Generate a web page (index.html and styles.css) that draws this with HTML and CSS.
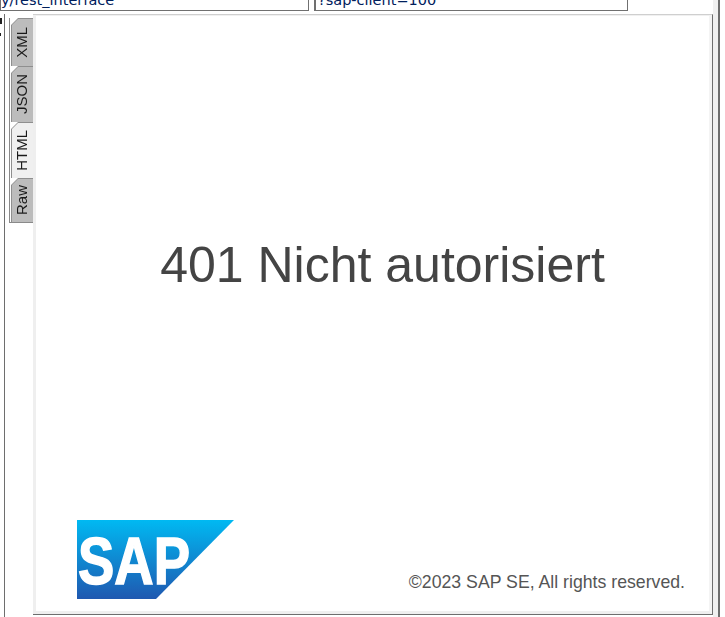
FILE: index.html
```html
<!DOCTYPE html>
<html lang="de">
<head>
<meta charset="utf-8">
<title>401 Nicht autorisiert</title>
<link rel="stylesheet" href="styles.css">
</head>
<body>
<div class="window">
  <div class="fields">
    <div class="field field-path"><span class="field-text">y/rest_interface</span></div>
    <div class="field field-query"><span class="field-text">?sap-client=100</span></div>
  </div>
  <div class="main">
    <div class="gutter"><span class="tick"></span><span class="tick tick-low"></span></div>
    <div class="tabs">
      <div class="tab tab-xml"><div class="tab-face"><span class="tab-label">XML</span></div></div>
      <div class="tab tab-json"><div class="tab-face"><span class="tab-label">JSON</span></div></div>
      <div class="tab tab-html tab-active"><div class="tab-face"><span class="tab-label">HTML</span></div></div>
      <div class="tab tab-raw"><div class="tab-face"><span class="tab-label">Raw</span></div></div>
    </div>
    <div class="panel">
      <div class="content">
        <h1 class="message">401 Nicht autorisiert</h1>
        <div class="footer">
          <svg class="logo" width="158" height="80" viewBox="0 0 158 80" role="img" aria-label="SAP">
            <defs>
              <linearGradient id="sapFill" x1="0" y1="0" x2="0" y2="1">
                <stop offset="0" stop-color="#00b9f2"/>
                <stop offset="1" stop-color="#1f58b0"/>
              </linearGradient>
            </defs>
            <polygon points="0,0 157,0 79,79 0,79" fill="url(#sapFill)"/>
            <text x="1" y="64" class="logo-text" textLength="112" lengthAdjust="spacingAndGlyphs">SAP</text>
          </svg>
          <p class="copyright">©2023 SAP SE, All rights reserved.</p>
        </div>
      </div>
    </div>
    <div class="strip"></div>
  </div>
</div>
</body>
</html>
```

FILE: styles.css
```css
* { box-sizing: border-box; }

html, body {
  margin: 0;
  padding: 0;
  background: #fff;
}

body {
  width: 725px;
  height: 617px;
  overflow: hidden;
  font-family: "Liberation Sans", Arial, sans-serif;
}

.window {
  display: flex;
  flex-direction: column;
  width: 725px;
  height: 617px;
}

.fields {
  display: flex;
  flex: none;
  gap: 5px;
  height: 11px;
  overflow: hidden;
}

.field {
  display: flex;
  align-items: flex-end;
  flex: none;
  height: 11px;
  background: #fff;
  border: 1px solid #707070;
  border-top: 0;
  overflow: hidden;
}

.field-path { width: 309px; }

.field-query {
  width: 314px;
  border-left-width: 2px;
  padding-left: 2px;
}

.field-text {
  font-family: "DejaVu Sans", sans-serif;
  font-size: 14.5px;
  line-height: 16px;
  color: #00205c;
  white-space: nowrap;
  margin-bottom: 2px;
}

.main {
  display: flex;
  flex: 1;
  min-height: 0;
  margin-top: 3px;
}

.gutter {
  display: flex;
  flex-direction: column;
  flex: none;
  width: 5px;
  padding-top: 4px;
  border-right: 1px solid #6e6e6e;
}

.tick {
  width: 3px;
  height: 6px;
  margin-left: -1px;
  background: #222;
}

.tick-low {
  width: 2px;
  height: 3px;
  margin-top: 9px;
}

.tabs {
  display: flex;
  flex-direction: column;
  flex: none;
  align-self: flex-start;
  width: 24px;
  margin-top: 4px;
  margin-left: 4px;
  padding-left: 1px;
  border-left: 1px solid #8a8a8a;
  border-bottom: 1px solid #8a8a8a;
}

.tab {
  flex: none;
  padding: 1px 0 0 1px;
  background: #8f8f8f;
  clip-path: polygon(0 7px, 7px 0, 100% 0, 100% 100%, 0 100%);
}

.tab-xml { height: 48px; }
.tab-json { height: 56px; }
.tab-html { height: 56px; }
.tab-raw { height: 44px; }

.tab-face {
  display: flex;
  align-items: center;
  justify-content: center;
  height: 100%;
  padding-right: 1px;
  background: #bcbcbc;
  clip-path: polygon(0 6px, 6px 0, 100% 0, 100% 100%, 0 100%);
}

.tab-active .tab-face {
  background: #f0f0f0;
}

.tab-label {
  writing-mode: vertical-rl;
  transform: rotate(180deg);
  font-size: 15px;
  line-height: 20px;
  color: #1a1a1a;
}

.panel {
  flex: none;
  width: 680px;
  height: 601px;
  background: #fff;
  border-top: 1px solid #cfcfcf;
  border-right: 1px solid #6e6e6e;
  border-bottom: 1px solid #6e6e6e;
}

.content {
  display: flex;
  flex-direction: column;
  justify-content: space-between;
  height: 100%;
  border-top: 1px solid #f0f0f0;
  border-left: 3px solid #efefef;
  border-right: 3px solid #f4f4f4;
  border-bottom: 3px solid #efefef;
  padding: 221px 24px 11px 41px;
}

.message {
  margin: 0;
  font-size: 50px;
  line-height: 56px;
  font-weight: 400;
  color: #444;
  text-align: center;
  padding-left: 3px;
}

.footer {
  display: flex;
  align-items: flex-end;
  justify-content: space-between;
}

.logo {
  display: block;
  flex: none;
  filter: blur(0.4px);
}

.logo-text {
  font-family: "Liberation Sans", Arial, sans-serif;
  font-size: 66px;
  font-weight: 700;
  fill: #fff;
  stroke: #fff;
  stroke-width: 1.5px;
}

.copyright {
  margin: 0 0 8px;
  font-size: 17.7px;
  line-height: 20px;
  color: #555;
  white-space: nowrap;
}

.strip {
  flex: none;
  width: 7px;
  background: #f0f0f0;
  border-right: 2px solid #6e6e6e;
  margin-top: -14px;
}
```
